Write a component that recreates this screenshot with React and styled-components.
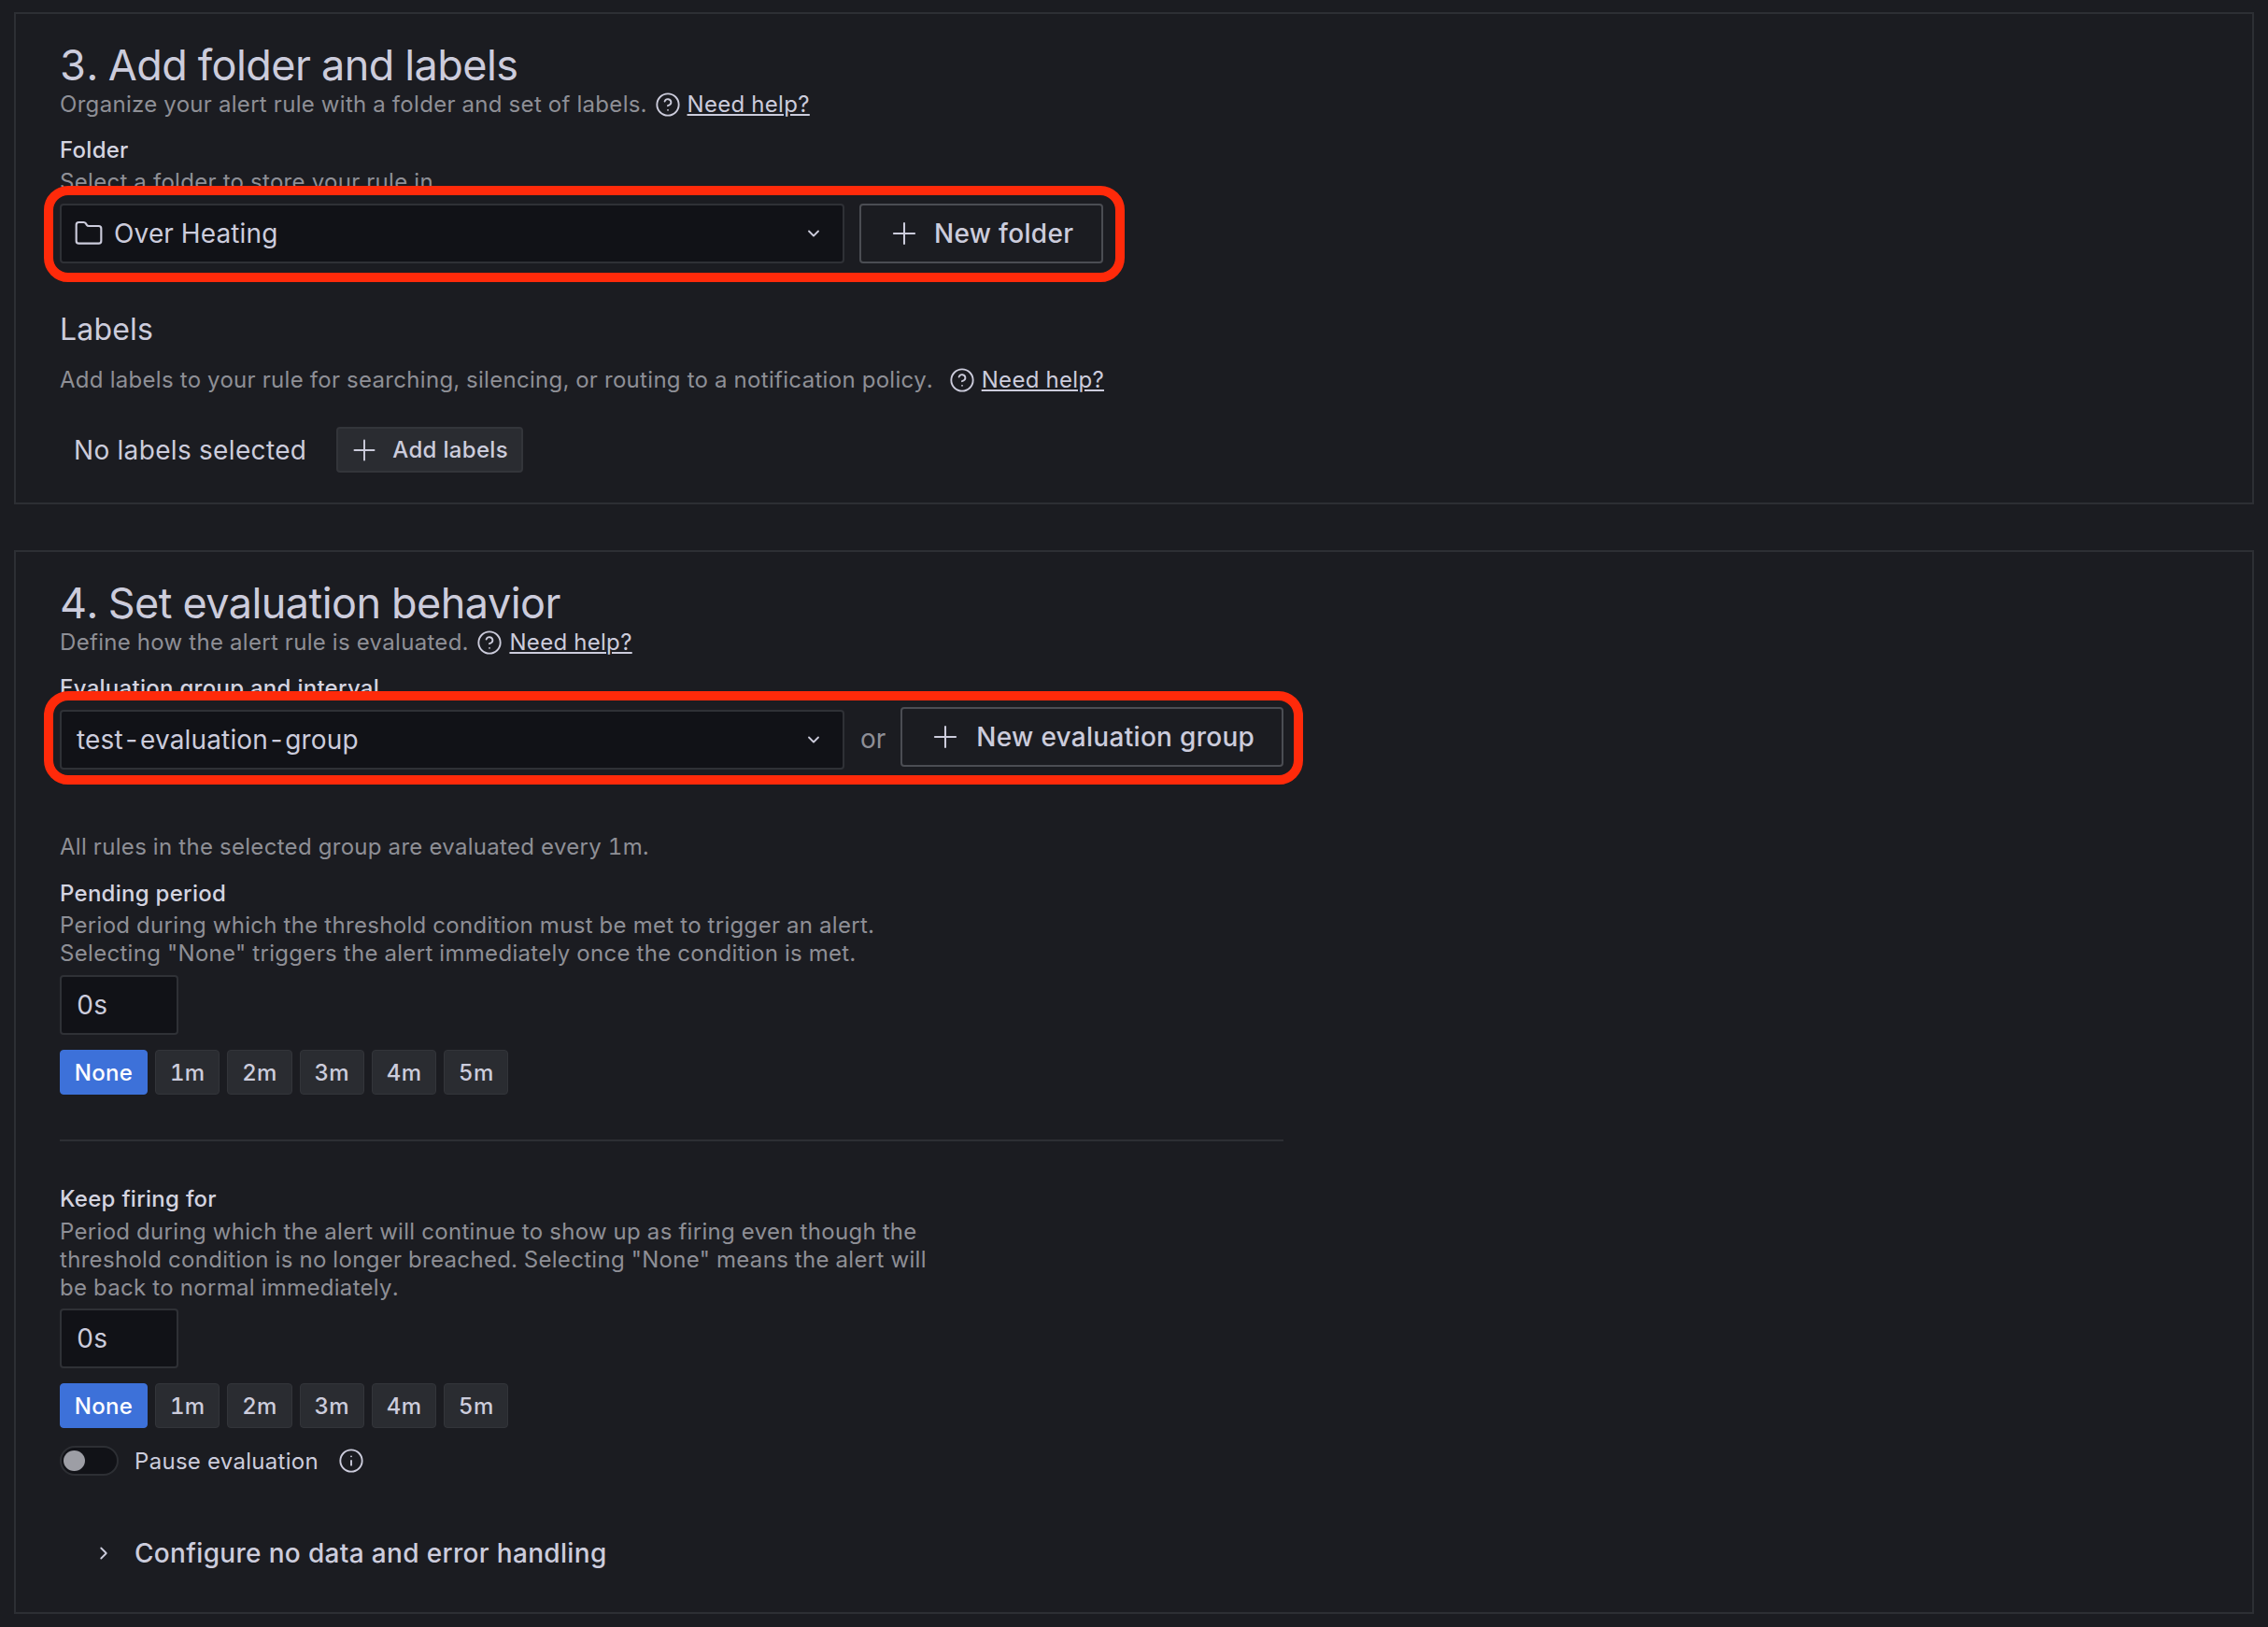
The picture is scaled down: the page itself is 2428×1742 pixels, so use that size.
import React from 'react'
import styled, { createGlobalStyle } from 'styled-components'
import { ChevronDown, ChevronRight, CircleHelp, Folder, Info, Plus } from 'lucide-react'

const GlobalStyle = createGlobalStyle`
html, body {
    margin: 0;
    padding: 0;
    background: #1b1c21;
    font-family: Inter, "Liberation Sans", sans-serif;
    font-variant-numeric: tabular-nums;
    color: #ccccdc;
}
`

const presets = ['1m', '2m', '3m', '4m', '5m']

const HelpLink = ({ gap }) => (
    <HelpWrap $gap={gap}>
        <CircleHelp size={28} strokeWidth={1.6} />
        <a href="#">Need help?</a>
    </HelpWrap>
)

const Presets = () => (
    <PresetRow>
        <Preset $active>None</Preset>
        {presets.map((p) => (
            <Preset key={p}>{p}</Preset>
        ))}
    </PresetRow>
)

const App = () => {
    return (
        <>
            <GlobalStyle />
            <Page>
                <Panel>
                    <Title>3. Add folder and labels</Title>
                    <Subtitle $top={1}>
                        Organize your alert rule with a folder and set of labels.
                        <HelpLink gap={8} />
                    </Subtitle>
                    <Label $top={19}>Folder</Label>
                    <Description $top={4}>Select a folder to store your rule in</Description>
                    <Highlight $top={-11} $pad="9px 13px 10px 7px">
                        <Select>
                            <SelectValue>
                                <Folder size={32} strokeWidth={1.6} />
                                Over Heating
                            </SelectValue>
                            <ChevronDown size={20} strokeWidth={2.2} />
                        </Select>
                        <OutlineButton $width={261} $gap={13}>
                            <Plus size={38} strokeWidth={1.3} />
                            New folder
                        </OutlineButton>
                    </Highlight>
                    <SubHeading>Labels</SubHeading>
                    <Subtitle $top={19}>
                        Add labels to your rule for searching, silencing, or routing to a notification policy.
                        <HelpLink gap={17} />
                    </Subtitle>
                    <LabelsRow>
                        No labels selected
                        <AddButton>
                            <Plus size={36} strokeWidth={1.3} />
                            Add labels
                        </AddButton>
                    </LabelsRow>
                </Panel>

                <Panel $second>
                    <Title>4. Set evaluation behavior</Title>
                    <Subtitle $top={1}>
                        Define how the alert rule is evaluated.
                        <HelpLink gap={9} />
                    </Subtitle>
                    <Label $top={19}>Evaluation group and interval</Label>
                    <Highlight $top={-12} $pad="7px 11px 6px 7px">
                        <Select $offset={3}>
                            <SelectValue>test-evaluation-group</SelectValue>
                            <ChevronDown size={20} strokeWidth={2.2} />
                        </Select>
                        <OrText>or</OrText>
                        <OutlineButton $width={410} $gap={14}>
                            <Plus size={38} strokeWidth={1.3} />
                            New evaluation group
                        </OutlineButton>
                    </Highlight>
                    <Description $top={52}>All rules in the selected group are evaluated every 1m.</Description>
                    <Label $top={20}>Pending period</Label>
                    <Description $top={4}>
                        Period during which the threshold condition must be met to trigger an alert.
                        <br />
                        Selecting "None" triggers the alert immediately once the condition is met.
                    </Description>
                    <DurationInput $top={8}>0s</DurationInput>
                    <Presets />
                    <Divider />
                    <Label $top={47}>Keep firing for</Label>
                    <Description $top={5}>
                        Period during which the alert will continue to show up as firing even though the
                        <br />
                        threshold condition is no longer breached. Selecting "None" means the alert will
                        <br />
                        be back to normal immediately.
                    </Description>
                    <DurationInput $top={7}>0s</DurationInput>
                    <Presets />
                    <PauseRow>
                        <Toggle>
                            <Knob />
                        </Toggle>
                        <span>Pause evaluation</span>
                        <Info size={28} strokeWidth={1.6} />
                    </PauseRow>
                    <Collapse>
                        <ChevronRight size={22} strokeWidth={2} />
                        Configure no data and error handling
                    </Collapse>
                </Panel>
            </Page>
        </>
    )
}

export default App

const Page = styled.div`
box-sizing:border-box;
width:2428px;
height:1742px;
padding:13px 15px 0;
overflow:hidden;
`

const Panel = styled.section`
border:2px solid #2d2f34;
padding:${props => props.$second ? '28px 47px 45px' : '28px 47px 32px'};
margin-top:${props => props.$second ? '49px' : '0'};
background:#1b1c21;
`

const Title = styled.h2`
margin:0;
font-size:45px;
font-weight:400;
line-height:53px;
letter-spacing:-0.55px;
color:#ccccdc;
`

const Subtitle = styled.div`
display:flex;
align-items:center;
margin-top:${props => props.$top || 0}px;
font-size:24px;
line-height:30px;
letter-spacing:0.31px;
color:#8e8f96;
`

const HelpWrap = styled.span`
display:inline-flex;
align-items:center;
gap:7px;
margin-left:${props => props.$gap}px;
color:#ccccdc;
a{
    color:#ccccdc;
    text-decoration:underline;
}
`

const Label = styled.div`
margin-top:${props => props.$top || 0}px;
font-size:24px;
font-weight:500;
line-height:30px;
letter-spacing:0.27px;
color:#d4d4e0;
`

const Description = styled.div`
margin-top:${props => props.$top || 0}px;
font-size:24px;
line-height:30px;
letter-spacing:0.31px;
color:#8e8f96;
`

const Highlight = styled.div`
position:relative;
display:flex;
align-items:flex-start;
box-sizing:border-box;
width:fit-content;
margin:${props => props.$top}px 0 0 -17px;
padding:${props => props.$pad};
border:10px solid #ff2a0a;
border-radius:26px;
background:#1b1c21;
`

const Select = styled.div`
display:flex;
align-items:center;
justify-content:space-between;
box-sizing:border-box;
width:840px;
height:64px;
margin-top:${props => props.$offset || 0}px;
padding:0 21px 0 16px;
border:2px solid #2f3136;
border-radius:4px;
background:#111217;
`

const SelectValue = styled.span`
display:flex;
align-items:center;
font-size:28px;
letter-spacing:0.15px;
color:#ccccdc;
svg{
    margin:0 11px 0 -3px;
}
`

const OutlineButton = styled.button`
display:flex;
align-items:center;
gap:${props => props.$gap}px;
box-sizing:border-box;
width:${props => props.$width}px;
height:64px;
margin-left:16px;
padding:0 0 0 27px;
border:2px solid #4b4d53;
border-radius:4px;
background:transparent;
font-family:inherit;
font-size:28px;
font-weight:500;
letter-spacing:0.3px;
color:#ccccdc;
`

const OrText = styled.span`
margin:0 0 0 17px;
align-self:center;
font-size:28px;
color:#8e8f96;
`

const SubHeading = styled.h5`
margin:31px 0 0;
font-size:32px;
font-weight:400;
line-height:40px;
letter-spacing:0.2px;
color:#ccccdc;
`

const LabelsRow = styled.div`
display:flex;
align-items:center;
gap:32px;
margin-top:35px;
padding-left:15px;
font-size:28px;
letter-spacing:0.35px;
color:#ccccdc;
`

const AddButton = styled.button`
display:flex;
align-items:center;
gap:12px;
box-sizing:border-box;
width:200px;
height:49px;
padding:0 0 0 10px;
border:2px solid #33353a;
border-radius:4px;
background:#2a2c31;
font-family:inherit;
font-size:24px;
font-weight:500;
letter-spacing:0.3px;
font-variant-numeric:tabular-nums;
color:#ccccdc;
`

const DurationInput = styled.div`
display:flex;
align-items:center;
box-sizing:border-box;
width:127px;
height:64px;
margin-top:${props => props.$top}px;
padding-left:16px;
border:2px solid #2f3136;
border-radius:4px;
background:#111217;
font-size:28px;
color:#ccccdc;
`

const PresetRow = styled.div`
display:flex;
gap:8px;
margin-top:16px;
`

const Preset = styled.button`
box-sizing:border-box;
width:${props => props.$active ? '94px' : '69.3px'};
height:48px;
padding:0;
border:1px solid ${props => props.$active ? '#3d71d9' : '#33353a'};
border-radius:4px;
background:${props => props.$active ? '#3d71d9' : '#2a2c31'};
font-family:inherit;
font-size:24px;
font-weight:500;
letter-spacing:0.3px;
font-variant-numeric:tabular-nums;
color:${props => props.$active ? '#ffffff' : '#ccccdc'};
`

const Divider = styled.hr`
width:1310px;
height:2px;
margin:48px 0 0;
border:0;
background:#2d2f34;
`

const PauseRow = styled.div`
display:flex;
align-items:center;
gap:17px;
margin-top:19px;
font-size:24px;
letter-spacing:0.3px;
color:#ccccdc;
svg{
    margin-left:4px;
}
`

const Toggle = styled.div`
display:flex;
align-items:center;
box-sizing:border-box;
width:63px;
height:32px;
padding-left:2px;
border:2px solid #2d2f34;
border-radius:16px;
background:#111217;
`

const Knob = styled.div`
width:23px;
height:22px;
border-radius:50%;
background:#9d9ea5;
`

const Collapse = styled.div`
display:flex;
align-items:center;
gap:22px;
margin-top:65px;
padding-left:36px;
font-size:28px;
font-weight:500;
line-height:36px;
letter-spacing:0.32px;
color:#ccccdc;
`
